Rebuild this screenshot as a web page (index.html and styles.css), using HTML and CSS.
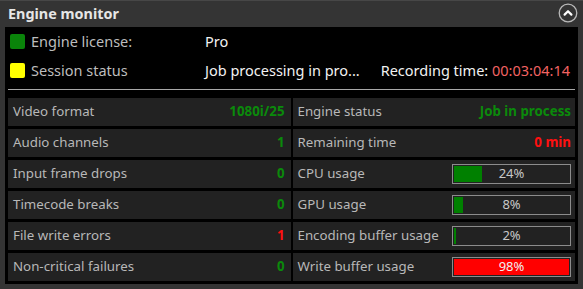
FILE: index.html
```html
<!DOCTYPE html>
<html lang="en">
<head>
    <meta charset="UTF-8">
    <title>Engine monitor</title>
    <link rel="stylesheet" href="styles.css">
</head>
<body>
    <div class="window">
        <div class="title-bar">
            <span class="title">Engine monitor</span>
            <button type="button" class="collapse-button">
                <svg width="20" height="20" viewBox="0 0 20 20">
                    <circle cx="10" cy="10" r="8.8" fill="none" stroke="#b8b8b8" stroke-width="1.3"/>
                    <path d="M6.6 11.6 L10 8.2 L13.4 11.6" fill="none" stroke="#fff" stroke-width="2.2" stroke-linecap="round" stroke-linejoin="round"/>
                </svg>
            </button>
        </div>

        <div class="panel">
            <div class="info">
                <div class="info-row">
                    <span class="led led-green"></span>
                    <span class="info-label">Engine license:</span>
                    <span class="info-value">Pro</span>
                </div>
                <div class="info-row">
                    <span class="led led-yellow"></span>
                    <span class="info-label">Session status</span>
                    <span class="info-value">Job processing in pro...</span>
                    <span class="info-value recording">Recording time: <span class="time">00:03:04:14</span></span>
                </div>
            </div>

            <div class="separator"></div>

            <div class="stats">
                <div class="cell"><span class="label">Video format</span><span class="value ok">1080i/25</span></div>
                <div class="cell"><span class="label">Engine status</span><span class="value ok">Job in process</span></div>

                <div class="cell"><span class="label">Audio channels</span><span class="value ok">1</span></div>
                <div class="cell"><span class="label">Remaining time</span><span class="value bad">0 min</span></div>

                <div class="cell"><span class="label">Input frame drops</span><span class="value ok">0</span></div>
                <div class="cell">
                    <span class="label">CPU usage</span>
                    <div class="bar"><div class="fill" style="width: 24%"></div><span class="bar-text">24%</span></div>
                </div>

                <div class="cell"><span class="label">Timecode breaks</span><span class="value ok">0</span></div>
                <div class="cell">
                    <span class="label">GPU usage</span>
                    <div class="bar"><div class="fill" style="width: 8%"></div><span class="bar-text">8%</span></div>
                </div>

                <div class="cell"><span class="label">File write errors</span><span class="value bad">1</span></div>
                <div class="cell">
                    <span class="label">Encoding buffer usage</span>
                    <div class="bar"><div class="fill" style="width: 2%"></div><span class="bar-text">2%</span></div>
                </div>

                <div class="cell"><span class="label">Non-critical failures</span><span class="value ok">0</span></div>
                <div class="cell">
                    <span class="label">Write buffer usage</span>
                    <div class="bar"><div class="fill fill-red" style="width: 98%"></div><span class="bar-text light">98%</span></div>
                </div>
            </div>
        </div>
    </div>
</body>
</html>
```

FILE: styles.css
```css
body {
    margin: 0;
    padding: 0;
    background-color: #343434;
    font-family: "Noto Sans", "Open Sans", sans-serif;
}
.window {
    width: 583px;
    height: 289px;
    box-sizing: border-box;
    border-top: 1px solid #474747;
    background-color: #343434;
}
.title-bar {
    height: 26px;
    display: flex;
    align-items: center;
    justify-content: space-between;
    padding: 0 5px 0 8px;
}
.title {
    color: #e6e6e6;
    font-size: 14.4px;
    font-weight: bold;
    margin-top: -1px;
}
.collapse-button {
    width: 20px;
    height: 20px;
    padding: 0;
    border: none;
    background: none;
    cursor: pointer;
    display: flex;
    margin-top: -2px;
}
.panel {
    margin: 0 5px;
    background-color: #000;
    padding: 0 3px 3px;
}
.info {
    padding: 0 5px 0 2px;
}
.info-row {
    height: 29px;
    display: flex;
    align-items: center;
    font-size: 14.5px;
}
.info-row span:not(.led) {
    margin-top: -2px;
}
.led {
    width: 15px;
    height: 15px;
    border-radius: 2px;
    margin-right: 6px;
    flex-shrink: 0;
}
.led-green {
    background-color: #0a840a;
}
.led-yellow {
    background-color: #ffff00;
}
.info-label {
    width: 174px;
    color: #bdbdbd;
}
.info-value {
    color: #f2f2f2;
}
.recording {
    margin-left: auto;
}
.info-row .time {
    color: #f26363;
    margin-top: 0;
}
.separator {
    height: 1px;
    background-color: #a8a8a8;
    margin: 4px 0 8px;
}
.stats {
    display: grid;
    grid-template-columns: 1fr 1fr;
    grid-auto-rows: 28px;
    gap: 3px 2px;
}
.cell {
    background-color: #222;
    display: flex;
    align-items: center;
    justify-content: space-between;
    padding: 0 6px 0 5px;
    font-size: 13.3px;
}
.cell:nth-child(even) {
    padding-right: 4px;
}
.label,
.value {
    margin-top: -3px;
}
.label {
    color: #b8b8b8;
}
.value {
    font-weight: bold;
}
.ok {
    color: #0b8a0b;
}
.bad {
    color: #ff1010;
}
.bar {
    position: relative;
    width: 117px;
    height: 18px;
    margin-top: -1px;
    border: 1px solid #8c8c8c;
    display: flex;
    align-items: center;
    justify-content: center;
}
.fill {
    position: absolute;
    left: 1px;
    top: 1px;
    bottom: 1px;
    max-width: calc(100% - 2px);
    background-color: #008000;
}
.fill-red {
    background-color: #ff0000;
}
.bar-text {
    position: relative;
    color: #c8c8c8;
    font-size: 13px;
    margin-top: -1px;
}
.bar-text.light {
    color: #f0f0f0;
}
```
